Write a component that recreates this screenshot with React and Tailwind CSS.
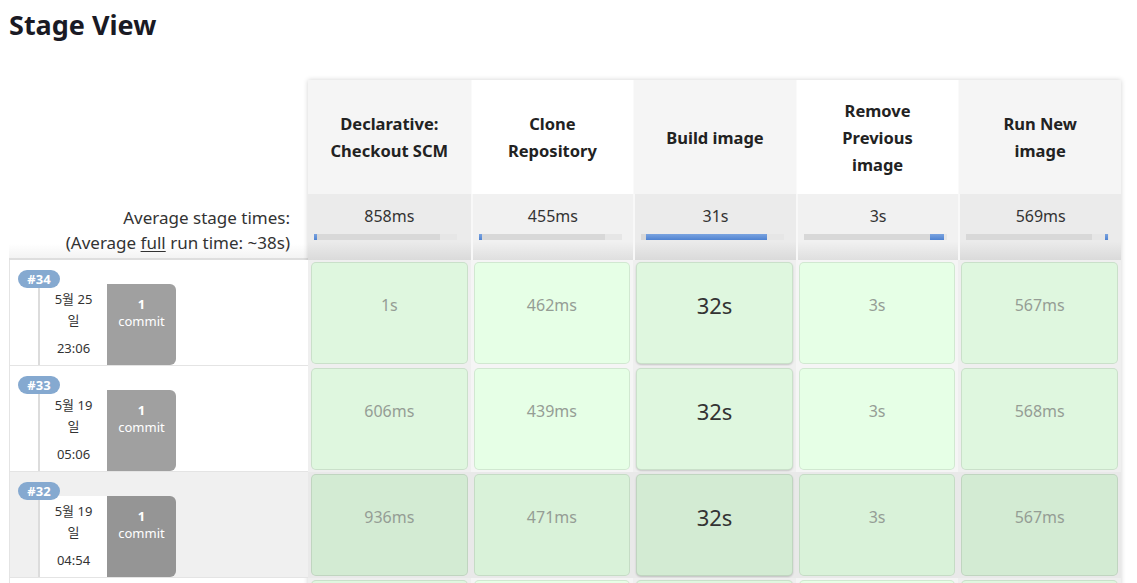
import React from "react"

// stage columns with the average bar position (px inside a 143px track)
const stages = [
  { name: ["Declarative:", "Checkout SCM"], avg: "858ms", bar: [0, 3] },
  { name: ["Clone", "Repository"], avg: "455ms", bar: [0, 3] },
  { name: ["Build image"], avg: "31s", bar: [5, 126] },
  { name: ["Remove", "Previous", "image"], avg: "3s", bar: [126, 140] },
  { name: ["Run New", "image"], avg: "569ms", bar: [139, 142] },
]

// last one only peeks in at the bottom edge, so it has no text
const builds = [
  { id: 34, date: "5월 25", time: "23:06", times: ["1s", "462ms", "32s", "3s", "567ms"] },
  { id: 33, date: "5월 19", time: "05:06", times: ["606ms", "439ms", "32s", "3s", "568ms"] },
  { id: 32, date: "5월 19", time: "04:54", times: ["936ms", "471ms", "32s", "3s", "567ms"], hover: true },
  { id: 31, empty: true, times: ["", "", "", "", ""] },
]

const LONGEST = 2

const ProgressBar = ({ bar }) => (
  <div className="relative ml-[6px] mt-[6px] flex h-[6px] w-[143px] shadow-[inset_0_1px_2px_rgba(0,0,0,0.12)]">
    <div className="h-full w-[126px] bg-[#d8d8d8]" />
    <div className="h-full flex-1 bg-[#e6e6e6]" />
    <div
      className="absolute top-0 h-full bg-[linear-gradient(to_bottom,#7aa3e0,#4f82d1)]"
      style={{ left: bar[0], width: bar[1] - bar[0] }}
    />
  </div>
)

const BuildLabel = ({ build }) => {
  if (build.empty) {
    return <div className="h-[106px] border-b border-l border-[#e4e4e4] bg-white" />
  }
  return (
    <div
      className={`relative h-[106px] border-b border-l border-[#e4e4e4] pl-[28px] pt-[24px] ${
        build.hover ? "bg-[#f0f0f0]" : "bg-white"
      }`}
    >
      <span className="absolute left-[8px] top-[10px] z-10 flex h-[18px] w-[42px] items-center justify-center rounded-full bg-[#85a9d0] text-[13px] font-bold leading-none text-white">
        #{build.id}
      </span>
      <div className="flex h-full">
        <div className="h-full w-[69px] border-l-2 border-[#dcdcdc] bg-white pt-[5px] text-center text-[13px] leading-[21px] text-[#333]">
          <div>{build.date}</div>
          <div>일</div>
          <div className="mt-[7px]">{build.time}</div>
        </div>
        <div
          className={`h-full w-[69px] rounded-r-[6px] pt-[12px] text-center text-[13px] leading-[17px] text-white ${
            build.hover ? "bg-[#959595]" : "bg-[#a0a0a0]"
          }`}
        >
          <div className="font-bold">1</div>
          <div>commit</div>
        </div>
      </div>
    </div>
  )
}

const StageCell = ({ value, col, hover }) => {
  const odd = col % 2 === 0
  let bg = odd ? "bg-[#dff7df]" : "bg-[#e6ffe6]"
  if (hover) bg = odd ? "bg-[#d3ebd3]" : "bg-[#d9f2d9]"
  const colBg = hover ? "bg-[#e9e9e9]" : odd ? "bg-[#efefef]" : "bg-[#f5f5f5]"
  const longest = col === LONGEST
  return (
    <div className={`h-[106px] px-[3px] py-[2px] ${colBg}`}>
      <div
        className={`flex h-full items-center justify-center rounded-[5px] border border-[rgba(0,0,0,0.09)] pb-[16px] ${bg} ${
          longest ? "text-[22px] text-[#333] shadow-[0_1px_2px_rgba(0,0,0,0.18)]" : "text-[16px] text-[#959d95]"
        }`}
      >
        {value}
      </div>
    </div>
  )
}

const App = () => {
  return (
    <div className="h-[583px] overflow-hidden bg-white pl-[9px] font-['Noto_Sans','Noto_Sans_CJK_KR',sans-serif] text-[#333]">
      <h1 className="pt-[9px] text-[27px] font-bold leading-[32px] text-[#1a1a24]">Stage View</h1>

      <div className="mt-[39px] flex">
        {/* left column: labels and builds */}
        <div className="w-[299px] shrink-0">
          <div className="h-[114px]" />
          <div className="h-[66px] border-b-2 border-[#dedede] bg-[linear-gradient(to_bottom,#ffffff_78%,#f3f3f3)] pr-[18px] pt-[11px] text-right text-[17px] leading-[25px]">
            <div>Average stage times:</div>
            <div>
              (Average <span className="underline underline-offset-2">full</span> run time: ~38s)
            </div>
          </div>
          {builds.map((b) => (
            <BuildLabel key={b.id} build={b} />
          ))}
        </div>

        {/* stage columns */}
        <div className="w-[813px] shrink-0 shadow-[0_0_5px_rgba(0,0,0,0.18)]">
          <div className="grid h-[114px] grid-cols-5">
            {stages.map((s, i) => (
              <div
                key={i}
                className={`flex flex-col items-center justify-center text-center text-[16.5px] font-bold leading-[27px] text-[#222] ${
                  i % 2 === 0 ? "bg-[#f5f5f5]" : "bg-white"
                } ${i > 0 ? "border-l border-[#fafafa]" : ""}`}
              >
                {s.name.map((line) => (
                  <div key={line} className="whitespace-nowrap">
                    {line}
                  </div>
                ))}
              </div>
            ))}
          </div>
          <div className="grid h-[66px] grid-cols-5">
            {stages.map((s, i) => (
              <div
                key={i}
                className={`pt-[10px] ${
                  i % 2 === 0
                    ? "bg-[linear-gradient(to_bottom,#ebebeb_72%,#dadada)]"
                    : "bg-[linear-gradient(to_bottom,#f1f1f1_72%,#dfdfdf)]"
                } ${i > 0 ? "border-l-2 border-[#f8f8f8]" : ""}`}
              >
                <div className="text-center text-[16px] leading-[24px] text-[#333]">{s.avg}</div>
                <ProgressBar bar={s.bar} />
              </div>
            ))}
          </div>
          {builds.map((b) => (
            <div key={b.id} className="grid grid-cols-5">
              {b.times.map((t, i) => (
                <StageCell key={i} value={t} col={i} hover={b.hover} />
              ))}
            </div>
          ))}
        </div>
      </div>
    </div>
  )
}

export default App
